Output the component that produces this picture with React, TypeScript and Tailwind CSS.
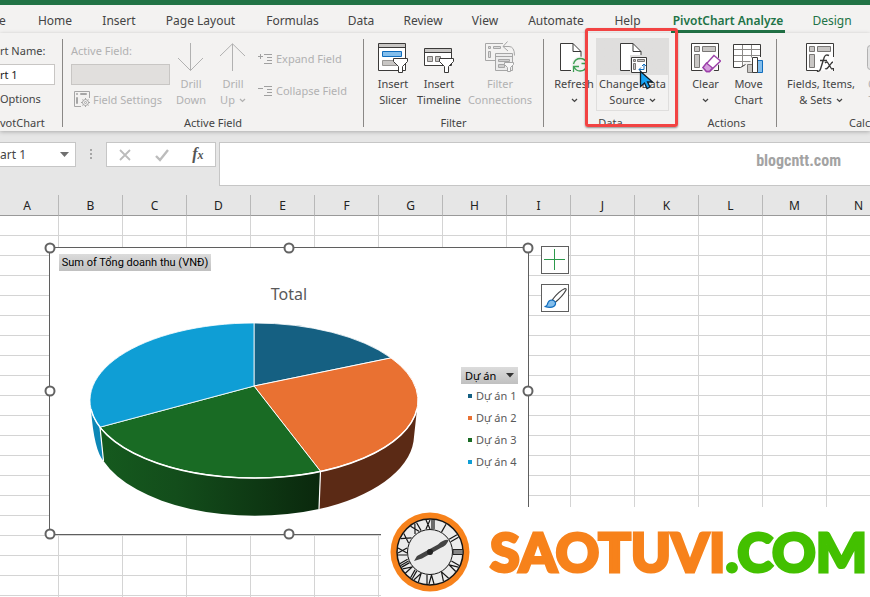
import type { ReactNode } from "react";
import clsx from "clsx";

const TABS = [
  { label: "e", width: "w-[21px] pr-4" },
  { label: "Home", width: "w-[68px]" },
  { label: "Insert", width: "w-[60px]" },
  { label: "Page Layout", width: "w-[103px]" },
  { label: "Formulas", width: "w-[81px]" },
  { label: "Data", width: "w-[56px]" },
  { label: "Review", width: "w-[68px]" },
  { label: "View", width: "w-[56px]" },
  { label: "Automate", width: "w-[86px]" },
  { label: "Help", width: "w-[57px]" },
  { label: "PivotChart Analyze", width: "w-[144px]", active: true },
  { label: "Design", width: "w-[64px]", contextual: true },
];

const COLUMNS = "ABCDEFGHIJKLMNOP".split("");
const ROWS = Array.from({ length: 20 }, (_, i) => i + 1);

const LEGEND = [
  { label: "Dự án 1", swatch: "bg-[#156082]" },
  { label: "Dự án 2", swatch: "bg-[#e97132]" },
  { label: "Dự án 3", swatch: "bg-[#196b24]" },
  { label: "Dự án 4", swatch: "bg-[#0f9ed5]" },
];

const HANDLES = [
  "left-0 top-0",
  "left-1/2 top-0",
  "left-full top-0",
  "left-0 top-1/2",
  "left-full top-1/2",
  "left-0 top-full",
  "left-1/2 top-full",
];

function Chevron() {
  return (
    <svg width="7" height="5" viewBox="0 0 7 5" className="inline-block" aria-hidden="true">
      <path d="M1 1l2.5 2.4L6 1" fill="none" stroke="currentColor" strokeWidth="1.3" />
    </svg>
  );
}

function DrillIcon({ up }: { up?: boolean }) {
  return (
    <svg width="30" height="30" viewBox="1 0 30 30" fill="none" stroke="#b1b1b1" aria-hidden="true">
      {up ? <path d="M15.5 28V1M3 13L15.5.8 28 13" /> : <path d="M15.5 0v27.5M3 15l12.5 12.5L28 15" />}
    </svg>
  );
}

function SlicerIcon() {
  return (
    <svg width="30" height="30" viewBox="0 0 30 30" aria-hidden="true">
      <path d="M.5.5h27v27H.5z" fill="#fff" stroke="#3b3a39" />
      <path d="M1 1h26v3H1z" fill="#c8c6c4" />
      <path d="M0 4.5h28" stroke="#3b3a39" />
      <path d="M4.500 8.500h19v5h-19z" fill="#83beec" stroke="#0f6cbd" />
      <path d="M4.500 17.500h14v5h-14z" fill="#c8c6c4" stroke="#979593" />
      <path d="M15.500 15.500h14v3l-5 5v6h-4v-6l-5-5z" fill="#fff" stroke="#3b3a39" />
    </svg>
  );
}

function TimelineIcon() {
  return (
    <svg width="30" height="30" viewBox="0 0 30 30" aria-hidden="true">
      <path d="M.5 5.500h27v17H.5z" fill="#fff" stroke="#3b3a39" />
      <path d="M1 6h26v3H1z" fill="#c8c6c4" />
      <path d="M0 9.500h28" stroke="#3b3a39" />
      <path d="M3.500 13.500h5v5h-5zM11.500 13.500h5v5h-5z" fill="#c8c6c4" stroke="#797775" />
      <path d="M15.500 15.500h14v3l-5 5v6h-4v-6l-5-5z" fill="#fff" stroke="#3b3a39" />
    </svg>
  );
}

function FilterConnectionsIcon() {
  return (
    <svg width="30" height="30" viewBox="0 0 30 30" fill="none" stroke="#a6a6a6" className="overflow-visible" aria-hidden="true">
      <path d="M18 .5H.5v17H10" />
      <path d="M3.500 3.500h2v2h-2zM8.500 3.500h7v2h-7zM3.500 8.500h2v6h-2z" fill="#dcdcdc" />
      <path d="M22.500-1.500L18 3.500l5 4.500M18 3.500h6q5.500 0 5.500 9" />
      <path d="M10.500 10.500h17v17h-17z" fill="#ececec" />
      <path d="M10.500 13.500h17" />
      <path d="M13.500 16.500h11v2h-11zM13.500 21.500h6v3h-6z" fill="#cfcfcf" />
      <path d="M19.500 19.500h9v2l-3 3v4h-3v-4l-3-3z" fill="#f7f7f7" />
    </svg>
  );
}

function RefreshIcon() {
  return (
    <svg width="30" height="30" viewBox="0 0 30 30" aria-hidden="true">
      <path d="M1.500.5H14l8 8V28H1.500z" fill="#fff" />
      <path d="M12 27.500H1.500V.5H14l8 8V14M14 .5v8h8" fill="none" stroke="#3b3a39" />
      <circle cx="21" cy="22" r="8.500" fill="#f3f2f1" />
      <path
        d="M14.500 21q1.500-5.500 7-5.500 4 0 6 4M28 15v5.500h-5.500M28 22.500q-1.500 5.500-7 5.500-4 0-6-4M14.500 29v-5.500H20"
        fill="none"
        stroke="#3fa054"
        strokeWidth="1.300"
      />
    </svg>
  );
}

function ChangeSourceIcon() {
  return (
    <svg width="30" height="30" viewBox="0 0 30 30" aria-hidden="true">
      <path d="M3 .5H15l8 8v19H3z" fill="#fff" />
      <path d="M12 27.500H2.500V.5H15l8 8V12M15 .5v8h8" fill="none" stroke="#3b3a39" />
      <path d="M12 12h18v18H12z" fill="#dfdedd" />
      <path d="M13.500 14.500h15v15h-15z" fill="#fff" stroke="#3b3a39" />
      <path d="M15.500 16.500h2v2h-2zM19.500 16.500h7v2h-7zM15.500 20.500h2v6h-2z" fill="#c8c6c4" stroke="#797775" />
      <path d="M21 26.500h5v-5M24 23l2-2 2 2M23 24.500l-2 2 2 2" fill="none" stroke="#0f6cbd" />
    </svg>
  );
}

function ClearIcon() {
  return (
    <svg width="30" height="30" viewBox="0 0 30 30" aria-hidden="true">
      <path d="M.5.5h27v27H.5z" fill="#fff" stroke="#3b3a39" />
      <path d="M3.500 3.500h5v5h-5zM11.500 3.500h13v5h-13zM3.500 11.500h5v13h-5z" fill="#c8c6c4" stroke="#797775" />
      <path d="M22.500 11L31 17.500 21 30H14l-4-4z" fill="#f3f2f1" />
      <path d="M23 12.500l6.500 5.500-11 10.500h-3L12 24.500z" fill="#fff" stroke="#9b3fa9" strokeWidth="1.300" />
      <path d="M15.500 20l6 5-3 3.500h-3L12 24.500z" fill="#d59ddd" stroke="#9b3fa9" strokeWidth="1.300" />
    </svg>
  );
}

function MoveChartIcon() {
  return (
    <svg width="31" height="30" viewBox="0 0 31 30" aria-hidden="true">
      <path d="M.5 1.500h27v17h-15l-5 6h-7z" fill="#fff" />
      <path d="M9.500 1.500v22M18.500 1.500v13M.5 6.500h27M.5 12.500h27M.5 18.500h17" fill="none" stroke="#8a8886" />
      <path d="M27.500 14V1.500H.5v23h7l5-3" fill="none" stroke="#3b3a39" />
      <path d="M14.500 21.500h5v8h-5z" fill="#c8c6c4" stroke="#797775" />
      <path d="M24.500 17.500h5v12h-5z" fill="#83beec" stroke="#0f6cbd" />
      <path d="M19.500 14.500h5v15h-5z" fill="#fff" stroke="#3b3a39" />
    </svg>
  );
}

function FieldsIcon() {
  return (
    <svg width="30" height="30" viewBox="0 0 30 30" aria-hidden="true">
      <path d="M.5.5h27v27H.5z" fill="#fff" />
      <path d="M12 27.500H.5V.5h27V14M27.500 25v3" fill="none" stroke="#3b3a39" />
      <path d="M3.500 3.500h5v5h-5zM11.500 3.500h13v5h-13zM3.500 11.500h5v13h-5z" fill="#c8c6c4" stroke="#797775" />
      <path d="M23 12.500q-4-2-5.200 3L14.500 26q-1 3-3.500 2M14 17.500h7" fill="none" stroke="#3b3a39" strokeWidth="1.400" />
      <path d="M19 20q2-2 3 0l3 5q1 2 2 0M27 19q-1 0-3 3l-2 2.500q-1.500 2-3 1" fill="none" stroke="#3b3a39" strokeWidth="1.300" />
    </svg>
  );
}

function OlapIcon() {
  return (
    <svg width="30" height="30" viewBox="0 0 30 30" aria-hidden="true">
      <rect x=".5" y="2.500" width="28" height="24" rx="3" fill="#e3e3e3" stroke="#b1b1b1" />
    </svg>
  );
}

function FieldSettingsIcon() {
  return (
    <svg width="17" height="17" viewBox="0 0 17 17" fill="none" stroke="#a6a6a6" aria-hidden="true">
      <path d="M7 15.500H.5V.5h15V7" />
      <path d="M2.500 2.500h1v1h-1zM6.500 2.500h6v1h-6zM2.500 6.500h1v6h-1z" />
      <circle cx="11.500" cy="11.500" r="3" />
      <circle cx="11.500" cy="11.500" r="1" />
      <path d="M11.500 7v1.500M11.500 14.500V16M7 11.500h1.500M14.500 11.500H16M8.500 8.500l1 1M13.500 13.500l1 1M14.500 8.500l-1 1M9.500 13.500l-1 1" />
    </svg>
  );
}

function ExpandIcon({ collapse }: { collapse?: boolean }) {
  return (
    <svg width="14" height="12" viewBox="0 0 14 12" fill="none" stroke="#a0a0a0" aria-hidden="true">
      <path d="M0 3.500h5M6 1.500h8M9 4.500h5M9 7.500h5M6 10.500h8" />
      {!collapse && <path d="M2.500 1v5" />}
    </svg>
  );
}

type RibbonButtonProps = {
  icon: ReactNode;
  lines: [string, string?];
  menu?: boolean;
  disabled?: boolean;
  className?: string;
  children?: ReactNode;
};

function RibbonButton({ icon, lines, menu, disabled, className, children }: RibbonButtonProps) {
  return (
    <button
      type="button"
      disabled={disabled}
      className={clsx(
        "relative flex h-[73px] shrink-0 flex-col items-center whitespace-nowrap leading-4",
        disabled ? "text-[#b1b1b1]" : "text-[#444444]",
        className,
      )}
    >
      <span className="flex h-[38px] w-full shrink-0 justify-center pt-[5px]">{icon}</span>
      <span>{lines[0]}</span>
      <span className="flex h-4 items-center gap-1">
        {lines[1]}
        {menu && <Chevron />}
      </span>
      {children}
    </button>
  );
}

type GroupProps = { label: string; className?: string; labelClass?: string; children: ReactNode };

function Group({ label, className, labelClass = "text-center", children }: GroupProps) {
  return (
    <section aria-label={label} className={clsx("relative flex shrink-0 flex-col", className)}>
      <div className="flex h-[77px]">{children}</div>
      <div className={clsx("h-4 leading-4 text-[#444444]", labelClass)}>{label}</div>
    </section>
  );
}

function Separator() {
  return <div className="mt-px mb-1 w-px shrink-0 bg-[#8a8886]" />;
}

function Ribbon() {
  return (
    <div className="relative z-10 flex h-[98px] bg-[#f3f2f1] pt-[5px] text-[11px] shadow-[0_1px_4px_rgba(0,0,0,0.25)]">
      <Group label="votChart" className="w-[62px]" labelClass="text-left">
        <div className="flex w-full flex-col pt-[5px] leading-4 text-[#444444]">
          <label htmlFor="chart-name">rt Name:</label>
          <input
            id="chart-name"
            defaultValue="rt 1"
            className="mt-[5px] h-[21px] w-[55px] border border-l-0 border-[#c8c6c4] bg-white text-[#222222] outline-none"
          />
          <button type="button" className="mt-[6px] text-left">
            Options
          </button>
        </div>
      </Group>
      <Separator />

      <Group label="Active Field" className="w-[300px]">
        <div className="ml-2 flex w-[99px] flex-col pt-[5px] leading-4 whitespace-nowrap text-[#b1b1b1]">
          <label htmlFor="active-field">Active Field:</label>
          <input
            id="active-field"
            disabled
            className="mt-[5px] h-[21px] w-full border border-[#c8c6c4] bg-[#e1dfdd]"
          />
          <button type="button" disabled className="mt-[6px] flex items-center gap-0.5 pl-[3px]">
            <FieldSettingsIcon />
            Field Settings
          </button>
        </div>
        <RibbonButton icon={<DrillIcon />} lines={["Drill", "Down"]} disabled className="w-[42px]" />
        <RibbonButton icon={<DrillIcon up />} lines={["Drill", "Up"]} menu disabled className="w-[42px]" />
        <div className="flex flex-col gap-4 pt-[13px] pl-1 leading-4 whitespace-nowrap text-[#b1b1b1]">
          <button type="button" disabled className="flex items-center gap-1">
            <ExpandIcon />
            Expand Field
          </button>
          <button type="button" disabled className="flex items-center gap-1">
            <ExpandIcon collapse />
            Collapse Field
          </button>
        </div>
      </Group>
      <Separator />

      <Group label="Filter" className="w-[179px]">
        <RibbonButton icon={<SlicerIcon />} lines={["Insert", "Slicer"]} className="ml-[6px] w-[46px]" />
        <RibbonButton icon={<TimelineIcon />} lines={["Insert", "Timeline"]} className="w-[46px]" />
        <RibbonButton icon={<FilterConnectionsIcon />} lines={["Filter", "Connections"]} disabled className="w-[76px]" />
      </Group>
      <Separator />

      <Group label="Data" className="w-[133px]">
        <RibbonButton icon={<RefreshIcon />} lines={["Refresh"]} menu className="ml-2 w-[44px]" />
        <RibbonButton
          icon={<ChangeSourceIcon />}
          lines={["Change Data", "Source"]}
          menu
          className="w-[73px] bg-linear-to-b from-[#dfdedd] from-[37px] to-[#f3f2f1] to-[37px] outline -outline-offset-1 outline-[#dfdedd]"
        >
          <svg width="15" height="20" viewBox="0 0 15 20" className="absolute top-8 left-[43px]" aria-hidden="true">
            <path d="M1.500 1.500v15l4-3.500 2.500 5.500 3-1.500-2.500-5h5z" fill="#18a4f5" stroke="#10202c" strokeWidth="1.300" />
          </svg>
        </RibbonButton>
        <div className="pointer-events-none absolute -top-[10px] -right-px left-[41px] h-[99px] rounded-[3px] border-[3px] border-[#f24343] shadow-[0_1px_2px_rgba(0,0,0,0.4)]" />
      </Group>

      <Group label="Actions" className="w-[99px]">
        <RibbonButton icon={<ClearIcon />} lines={["Clear"]} menu className="ml-[7px] w-[43px]" />
        <RibbonButton icon={<MoveChartIcon />} lines={["Move", "Chart"]} className="w-[43px]" />
      </Group>
      <Separator />

      <Group label="Calculations" className="min-w-0 flex-1 overflow-hidden" labelClass="pl-[72px]">
        <RibbonButton icon={<FieldsIcon />} lines={["Fields, Items,", "& Sets"]} menu className="ml-[7px] w-[74px]" />
        <RibbonButton icon={<OlapIcon />} lines={["OLAP", "Tools"]} disabled className="w-[48px]" />
      </Group>
    </div>
  );
}

function FormulaBar() {
  return (
    <div className="flex h-[64px] items-start bg-[#e6e6e6] pt-[11px]">
      <div className="flex h-[25px] w-[76px] shrink-0 items-center border border-l-0 border-[#c6c6c6] bg-white">
        <input aria-label="Name box" defaultValue="art 1" className="w-14 text-xs text-[#444444] outline-none" />
        <button type="button" aria-label="Open name list" className="px-1">
          <svg width="9" height="5" viewBox="0 0 9 5" aria-hidden="true">
            <path d="M0 0h9L4.500 5z" fill="#6f6f6f" />
          </svg>
        </button>
      </div>
      <svg width="30" height="25" viewBox="0 0 30 25" aria-hidden="true">
        <path d="M14 7h2v2h-2zM14 11h2v2h-2zM14 15h2v2h-2z" fill="#a6a6a6" />
      </svg>
      <div className="flex h-[25px] w-[110px] shrink-0 items-center justify-around border border-[#c6c6c6] bg-white">
        <button type="button" aria-label="Cancel">
          <svg width="14" height="14" viewBox="0 0 14 14" aria-hidden="true">
            <path d="M2 2l10 10M12 2L2 12" stroke="#bcbcbc" strokeWidth="1.800" />
          </svg>
        </button>
        <button type="button" aria-label="Enter">
          <svg width="14" height="14" viewBox="0 0 14 14" aria-hidden="true">
            <path d="M1 8l4 4 8-10" fill="none" stroke="#bcbcbc" strokeWidth="2.400" />
          </svg>
        </button>
        <button type="button" className="font-['Liberation_Serif',serif] text-base leading-4 font-bold text-[#555555] italic">
          f<span className="text-xs">x</span>
        </button>
      </div>
      <div className="ml-[3px] flex h-[44px] flex-1 items-start justify-end border border-r-0 border-[#c6c6c6] bg-white pt-2 pr-[29px]">
        <span className="font-['Liberation_Sans_Narrow','Roboto_Condensed','Liberation_Sans',sans-serif] text-base leading-5 font-bold text-[#a3a3a3]">
          blogcntt.com
        </span>
      </div>
    </div>
  );
}

function PieChart() {
  return (
    <svg
      width="332"
      height="198"
      viewBox="88 321 332 198"
      className="absolute top-[73px] left-[38px]"
      role="img"
      aria-label="Total by project"
    >
      <defs>
        <linearGradient id="greenSide" x1="0" x2="1">
          <stop offset="0" stopColor="#155a1e" />
          <stop offset=".35" stopColor="#134d1b" />
          <stop offset="1" stopColor="#0a280d" />
        </linearGradient>
      </defs>
      <path d="M91 409A164 77.500 0 0 0 100 427.150L103.500 461Q94 450 91 409Z" fill="#0d87b6" />
      <path d="M100 427.150A164 77.500 0 0 0 320.500 471.300L319 509A160 81 0 0 1 103.500 461Z" fill="url(#greenSide)" />
      <path d="M320.500 471.300A164 77.500 0 0 0 417 409.100L413.500 441.400A160 81 0 0 1 319 509Z" fill="#5b2a15" />
      <g stroke="#fff" strokeLinejoin="round">
        <path d="M254 386V323A164 77.500 0 0 1 391 357.900Z" fill="#156082" strokeWidth=".8" />
        <path d="M254 386L391 357.900A164 77.500 0 0 1 320.500 471.300Z" fill="#e97132" />
        <path d="M254 386L320.500 471.300A164 77.500 0 0 1 100 427.150Z" fill="#196b24" />
        <path d="M254 386L100 427.150A164 77.500 0 0 1 254 323Z" fill="#0f9ed5" strokeWidth=".8" />
        <path d="M91 409.100A164 77.500 0 0 0 417 409.100" fill="none" strokeWidth="1.500" />
        <path d="M100 427l3.500 34M320.500 471L319 509" strokeWidth="1.200" />
      </g>
    </svg>
  );
}

function ChartObject() {
  return (
    <div className="absolute top-[52px] left-[49px] h-[288px] w-[480px] border border-[#5f5f5f] bg-white">
      <button
        type="button"
        className="absolute top-[6px] left-[9px] h-[17px] w-[152px] bg-linear-to-b from-[#dcdcdc] to-[#c0c0c0] font-['Roboto',sans-serif] text-[11px] leading-4 whitespace-nowrap text-black"
      >
        Sum of Tổng doanh thu (VNĐ)
      </button>
      <h2 className="pt-9 text-center text-base leading-5 text-[#595959]">Total</h2>
      <PieChart />
      <div className="absolute top-[119px] left-[411px] w-[57px] text-[11px]">
        <button
          type="button"
          className="flex h-[17px] w-full items-center justify-between bg-linear-to-b from-[#dcdcdc] to-[#c0c0c0] px-1 leading-4 text-black"
        >
          Dự án
          <svg width="8" height="5" viewBox="0 0 8 5" aria-hidden="true">
            <path d="M0 0h8L4 4.500z" fill="#333" />
          </svg>
        </button>
        <ul className="flex flex-col gap-[6px] pt-1">
          {LEGEND.map((item) => (
            <li key={item.label} className="flex h-4 items-center gap-1 pl-[7px] leading-4 whitespace-nowrap text-[#595959]">
              <span className={clsx("size-1 shrink-0", item.swatch)} />
              {item.label}
            </li>
          ))}
        </ul>
      </div>
      {HANDLES.map((position) => (
        <span
          key={position}
          className={clsx("absolute size-[11px] -translate-1/2 rounded-full border-2 border-[#636363] bg-white", position)}
        />
      ))}
      <div className="absolute -top-[2px] left-[491px] flex flex-col gap-[10px]">
        <button type="button" aria-label="Chart elements" className="size-7 border border-[#5f5f5f] bg-white">
          <svg width="26" height="26" viewBox="0 0 26 26" aria-hidden="true">
            <path d="M2 12.500h21M12.500 2v21" stroke="#2c9a4b" />
          </svg>
        </button>
        <button type="button" aria-label="Chart styles" className="size-7 border border-[#5f5f5f] bg-white">
          <svg width="26" height="26" viewBox="0 0 26 26" aria-hidden="true">
            <path d="M10.500 14.500Q17 6 23 3.500q1.500 0 1 1.500Q21 11 13 17.500z" fill="#fff" stroke="#444" strokeWidth="1.200" />
            <path d="M2.500 21.500q2.500 0 3-2.500 1-4 4.500-4 4 1 3.500 4Q12 24 2.500 21.500z" fill="#83beec" stroke="#0f6cbd" strokeWidth="1.200" />
          </svg>
        </button>
      </div>
    </div>
  );
}

// Hour marks of the dial as strokes between the two rings, in steps of 30 degrees.
const HOUR_MARKS = [
  "M-4-32L0-23M0-32L-4-23M2-32v9M4-32v9",
  "M0-32v9",
  "M-1.500-32v9M1.500-32v9",
  "",
  "M-3-32v9M-1-32L1.500-23 4-32",
  "M-3-32L0-23 3-32",
  "M-4-32L-1.500-23 1-32M3-32v9",
  "M-5-32L-3-23 0-32M2-32v9M4-32v9",
  "M-6-32L-4-23-1-32M1-32v9M3-32v9M5-32v9",
  "M-3-32v9M-1-32L4-23M4-32L-1-23",
  "M-3-32L3-23M3-32L-3-23",
  "M-4-32L1-23M1-32L-4-23M3-32v9",
];

function ClockLogo() {
  return (
    <svg width="80" height="80" viewBox="-40 -40 80 80" className="shrink-0" aria-hidden="true">
      <circle r="39.500" fill="#f7821b" />
      <circle r="33" fill="#ececec" stroke="#161616" strokeWidth="1.500" />
      {HOUR_MARKS.map((mark, hour) => (
        <path key={hour} d={mark} transform={`rotate(${hour * 30})`} fill="none" stroke="#161616" strokeWidth="1.200" />
      ))}
      <circle r="22.500" fill="#ececec" stroke="#161616" />
      <path d="M23-2.500h10v5H23z" fill="#858585" stroke="#222" />
      <path d="M-16 9l3-5L8-7.500Q14-13 18.500-12q-1 5-8 8L-8 6.500z" fill="#444" />
      <circle r="3" fill="#222" />
    </svg>
  );
}

function SiteBanner() {
  return (
    <div className="absolute right-0 bottom-0 left-[381px] flex h-[90px] items-center bg-white pl-[9px]">
      <ClockLogo />
      <div className="ml-5 font-['Lato',sans-serif] text-[54px] leading-[60px] font-black whitespace-nowrap text-[#f7821b] [-webkit-text-stroke:3px]">
        SAOTUVI<span className="text-[#43c000]">.COM</span>
      </div>
    </div>
  );
}

function Sheet() {
  return (
    <main className="relative min-h-0 flex-1 overflow-hidden bg-white">
      <table className="w-[1019px] table-fixed border-separate border-spacing-0">
        <thead>
          <tr>
            {COLUMNS.map((column) => (
              <th
                key={column}
                scope="col"
                className="h-[21px] w-16 border-r border-b border-r-[#b8b8b8] border-b-[#999999] bg-[#e6e6e6] p-0 pt-0.5 text-xs leading-4 font-normal text-[#222222] first:w-[59px] first:pr-1"
              >
                {column}
              </th>
            ))}
          </tr>
        </thead>
        <tbody>
          {ROWS.map((row) => (
            <tr key={row}>
              {COLUMNS.map((column) => (
                <td key={column} className="h-5 border-r border-b border-[#d4d4d4] p-0" />
              ))}
            </tr>
          ))}
        </tbody>
      </table>
      <ChartObject />
      <SiteBanner />
    </main>
  );
}

export default function App() {
  return (
    <div className="flex h-screen flex-col overflow-hidden bg-white font-['Noto_Sans','Open_Sans',sans-serif]">
      <div className="h-[5px] shrink-0 bg-[#217346]" />
      <nav className="flex h-7 shrink-0 bg-[#f3f2f1] text-xs">
        {TABS.map((tab) => (
          <button
            key={tab.label}
            type="button"
            className={clsx(
              "flex shrink-0 justify-center whitespace-nowrap",
              tab.width,
              tab.active || tab.contextual ? "text-[#217346]" : "text-[#444444]",
            )}
          >
            <span
              className={clsx(
                "h-7 border-b-[3px] pt-2 leading-4",
                tab.active ? "border-[#217346] px-0.5 font-semibold" : "border-transparent",
              )}
            >
              {tab.label}
            </span>
          </button>
        ))}
      </nav>
      <Ribbon />
      <FormulaBar />
      <Sheet />
    </div>
  );
}
